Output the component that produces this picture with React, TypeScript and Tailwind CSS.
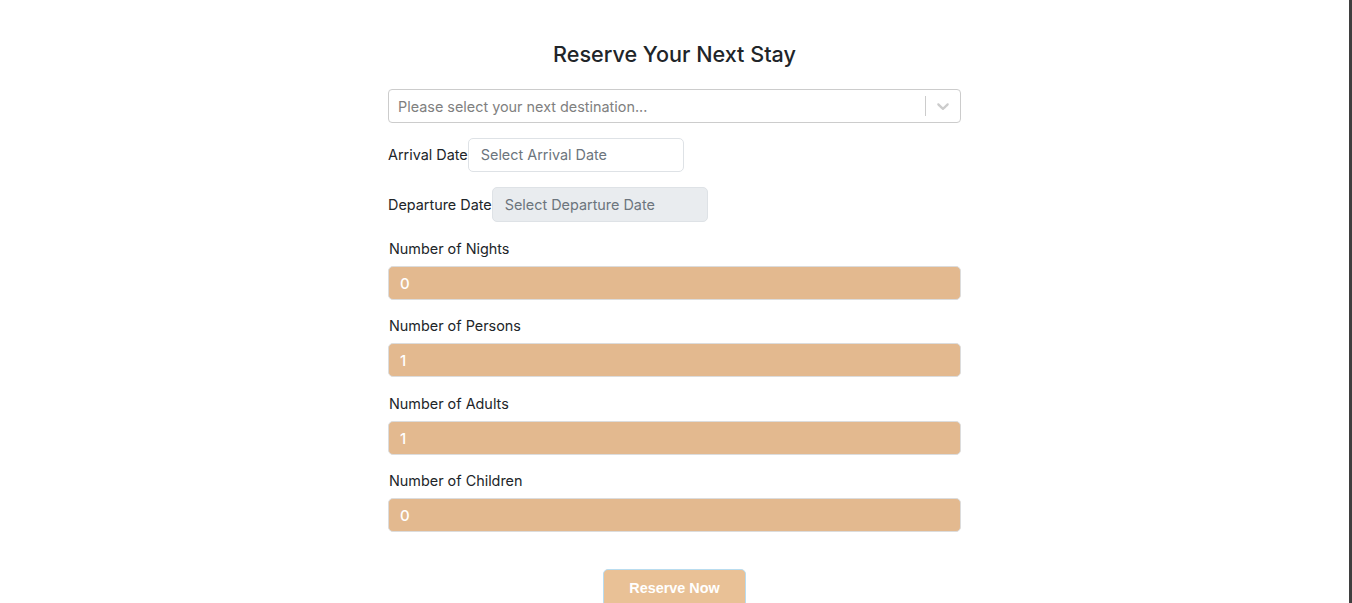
import { useState } from "react";

const inter = { fontFamily: "Inter, 'Noto Sans', sans-serif" };

const NumberField = ({ label, value, gap }: { label: string; value: string; gap: string }) => (
  <div className={gap}>
    <label className="block text-[14.4px] leading-[21px] text-[#212529] mb-[7px] pl-px">{label}</label>
    <input
      type="text"
      readOnly
      value={value}
      className="w-full h-[34px] pl-[11px] pr-3 rounded-[5px] border border-[#dcdcdc] bg-[#e3b98f] text-white text-[15px] font-medium outline-none"
    />
  </div>
);

const App = () => {
  const [destination] = useState("");

  return (
    <div className="flex min-h-[603px] bg-white" style={inter}>
      <div className="flex-1 flex justify-center">
        <div className="w-[573px] pt-[38px]">
          <h1 className="text-center text-[21.6px] leading-[32px] font-medium text-[#212529] mb-[19px]">
            Reserve Your Next Stay
          </h1>

          <div className="flex items-center h-[34px] rounded-[4px] border border-[#cccccc] bg-white">
            <div className="flex-1 pl-[9px] pt-px text-[14.4px] text-[#808080]">
              {destination || "Please select your next destination..."}
            </div>
            <span className="w-px h-5 bg-[#cccccc]" />
            <div className="w-[34px] flex justify-center text-[#cccccc]">
              <svg width="20" height="20" viewBox="0 0 20 20" fill="currentColor">
                <path d="M4.516 7.548c0.436-0.446 1.043-0.481 1.576 0l3.908 3.747 3.908-3.747c0.533-0.481 1.141-0.446 1.574 0 0.436 0.445 0.408 1.197 0 1.615-0.406 0.418-4.695 4.502-4.695 4.502-0.217 0.223-0.502 0.335-0.787 0.335s-0.57-0.112-0.789-0.335c0 0-4.287-4.084-4.695-4.502s-0.436-1.17 0-1.615z" />
              </svg>
            </div>
          </div>

          <div className="flex items-center mt-[15px]">
            <span className="text-[14.4px] text-[#212529]">Arrival Date</span>
            <input
              type="text"
              placeholder="Select Arrival Date"
              className="w-[216px] h-[34px] px-3 pb-[2px] rounded-[5px] border border-[#dee2e6] bg-white text-[14.4px] placeholder:text-[#6c757d] outline-none"
            />
          </div>

          <div className="flex items-center mt-[15px]">
            <span className="text-[14.4px] text-[#212529]">Departure Date</span>
            <input
              type="text"
              disabled
              placeholder="Select Departure Date"
              className="w-[216px] h-[35px] px-3 rounded-[5px] border border-[#dee2e6] bg-[#e9ecef] text-[14.4px] placeholder:text-[#6c757d] outline-none"
            />
          </div>

          <NumberField label="Number of Nights" value="0" gap="mt-[16px]" />
          <NumberField label="Number of Persons" value="1" gap="mt-[15px]" />
          <NumberField label="Number of Adults" value="1" gap="mt-[16px]" />
          <NumberField label="Number of Children" value="0" gap="mt-[15px]" />

          <div className="flex justify-center mt-[37px]">
            <button
              className="w-[143px] h-[40px] rounded-[5px] border border-[#b9dcef] bg-[#e9c196] text-white text-[14.4px] font-semibold"
              style={{ fontFamily: "'Liberation Sans', Arial, sans-serif" }}
            >
              Reserve Now
            </button>
          </div>
        </div>
      </div>
      <div className="w-[3px] bg-[#3f3f3f]" />
    </div>
  );
};

export default App;
